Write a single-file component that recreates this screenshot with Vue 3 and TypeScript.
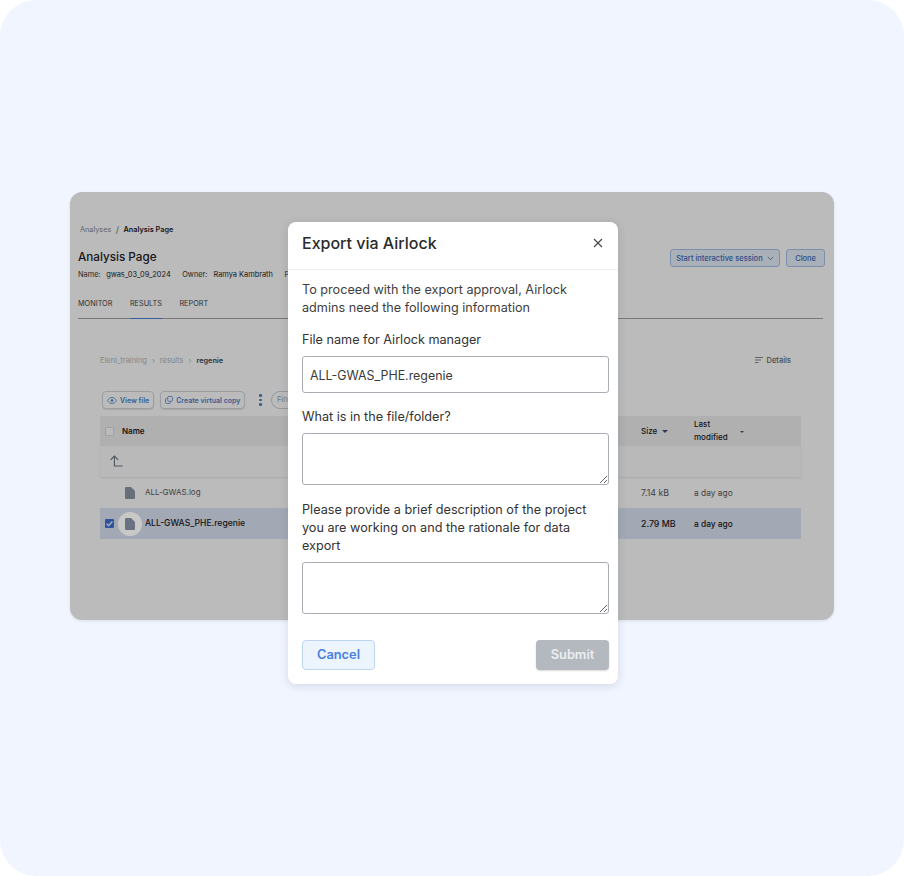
<script setup lang="ts">
interface FileRow { name: string; size: string; age: string; selected: boolean }
const files: FileRow[] = [
  { name: 'ALL-GWAS.log', size: '7.14 kB', age: 'a day ago', selected: false },
  { name: 'ALL-GWAS_PHE.regenie', size: '2.79 MB', age: 'a day ago', selected: true },
]
</script>

<template>
  <div class="stage">
    <section class="panel">
      <div class="crumbs"><span class="muted">Analyses</span><span class="slash">/</span><b>Analysis Page</b></div>
      <div class="head">
        <div>
          <h2>Analysis Page</h2>
          <div class="meta">
            <span class="m">Name:</span><span>gwas_03_09_2024</span>
            <span class="m owner">Owner:</span><span>Ramya Kambrath</span>
            <span class="m owner">Project</span>
          </div>
        </div>
        <div class="head-actions">
          <button class="pill">Start interactive session
            <svg width="7" height="5" viewBox="0 0 7 5"><path d="M.8 1l2.7 2.6L6.2 1" fill="none" stroke="#5d7ba8" stroke-width=".9" /></svg>
          </button>
          <button class="pill clone">Clone</button>
        </div>
      </div>
      <nav class="tabs">
        <span>MONITOR</span><span class="on">RESULTS</span><span>REPORT</span>
      </nav>
      <div class="browser">
        <div class="path">
          <span class="faded">Eleni_training</span><span class="faded sep">›</span>
          <span class="faded">results</span><span class="faded sep">›</span>
          <b>regenie</b>
          <span class="details">
            <svg width="8" height="6" viewBox="0 0 8 6"><path d="M0 .5h8M0 3h6M0 5.5h3.5" stroke="#888" stroke-width="1" /></svg>
            Details
          </span>
        </div>
        <div class="tools">
          <button class="tool">
            <svg width="10" height="7" viewBox="0 0 10 7"><path d="M.5 3.5C2 1.3 3.4.5 5 .5s3 .8 4.5 3C8 5.700 6.600 6.500 5 6.500S2 5.700.5 3.500z" fill="none" stroke="#4f80c8" stroke-width=".8" /><circle cx="5" cy="3.500" r="1.300" fill="#4f80c8" /></svg>
            View file
          </button>
          <button class="tool">
            <svg width="8" height="8" viewBox="0 0 8 8"><rect x="2.700" y=".5" width="4.800" height="4.800" rx="1" fill="none" stroke="#4f80c8" stroke-width=".8" /><path d="M1.700 2.500H1.300a.8.8 0 0 0-.8.8v3.400c0 .4.400.8.800.8h3.400c.4 0 .8-.4.800-.8v-.4" fill="none" stroke="#4f80c8" stroke-width=".8" /></svg>
            Create virtual copy
          </button>
          <span class="kebab"><i></i><i></i><i></i></span>
          <span class="find">Find</span>
        </div>
        <div class="table">
          <div class="row header">
            <span class="box"></span>
            <span class="name">Name</span>
            <span class="size">Size <i class="caret"></i></span>
            <span class="age lm">Last<br />modified<i class="caret small"></i></span>
          </div>
          <div class="row up">
            <svg class="up-icon" width="13" height="12" viewBox="0 0 13 12"><path d="M.6 4.800L4.400 1 8.200 4.800M4.400 1.200V11H12.600" fill="none" stroke="#6d7680" stroke-width="1.100" /></svg>
          </div>
          <div v-for="f in files" :key="f.name" class="row file" :class="{ selected: f.selected }">
            <span class="check" v-if="f.selected">
              <svg width="9" height="9" viewBox="0 0 9 9"><path d="M1.600 4.700l2 2 3.800-4.200" fill="none" stroke="#fff" stroke-width="1.200" /></svg>
            </span>
            <span class="check-slot" v-else></span>
            <span class="icon-wrap" :class="{ halo: f.selected }">
              <svg width="10" height="12" viewBox="0 0 10 12"><path d="M1 0h5l4 4v7a1 1 0 0 1-1 1H1a1 1 0 0 1-1-1V1a1 1 0 0 1 1-1z" /></svg>
            </span>
            <span class="name">{{ f.name }}</span>
            <span class="size">{{ f.size }}</span>
            <span class="age">{{ f.age }}</span>
          </div>
        </div>
      </div>
      <div class="scrim"></div>
    </section>

    <form class="modal" @submit.prevent>
      <header>
        <h1>Export via Airlock</h1>
        <svg width="10" height="10" viewBox="0 0 10 10"><path d="M1 1l8 8M9 1L1 9" stroke="#444" stroke-width="1.100" /></svg>
      </header>
      <div class="body">
        <p class="intro">To proceed with the export approval, Airlock admins need the following information</p>
        <label class="lab">File name for Airlock manager</label>
        <input class="field" value="ALL-GWAS_PHE.regenie" />
        <label class="lab second">What is in the file/folder?</label>
        <textarea class="area"></textarea>
        <label class="lab third">Please provide a brief description of the project you are working on and the rationale for data export</label>
        <textarea class="area last"></textarea>
        <div class="foot">
          <button type="button" class="cancel">Cancel</button>
          <button type="submit" class="submit" disabled>Submit</button>
        </div>
      </div>
    </form>
  </div>
</template>

<style>
html, body { margin: 0; background: #fff; }
</style>

<style scoped>
* { box-sizing: border-box; }
.stage {
  position: relative;
  width: 904px;
  height: 876px;
  padding: 192px 70px 0;
  background: #f0f5ff;
  border-radius: 36px;
  font-family: Inter, "Liberation Sans", sans-serif;
  overflow: hidden;
}
.panel {
  position: relative;
  width: 764px;
  height: 428px;
  padding: 32px 11px 0 8px;
  background: #fff;
  border-radius: 12px;
  overflow: hidden;
  color: #1f2328;
  box-shadow: 0 1px 3px rgba(0,0,0,.1);
}
.scrim { position: absolute; inset: 0; background: rgba(0,0,0,.265); }
.crumbs { display: flex; align-items: center; height: 10px; padding-left: 2px; font-size: 7.300px; }
.crumbs b { font-weight: 600; }
.muted { color: #8a8a8a; }
.slash { margin: 0 4.500px; color: #777; font-size: 9px; }
.head { display: flex; justify-content: space-between; align-items: flex-start; margin-top: 15px; }
h2 { margin: 0; font-size: 11.700px; font-weight: 500; line-height: 16px; }
.meta { display: flex; margin-top: 4px; font-size: 7.400px; line-height: 11px; white-space: nowrap; }
.meta .m { color: #333; margin-right: 5.500px; }
.meta .owner { margin-left: 11.500px; margin-right: 6px; }
.head-actions { display: flex; gap: 6px; margin: 0 -2px 0 0; }
.pill {
  display: flex; align-items: center; gap: 4px; height: 18px; padding: 0 5.500px;
  border: 1px solid #a8c4e8; border-radius: 3px; background: #e8f0fb;
  color: #3f6cb8; font: 500 7.500px Inter, sans-serif;
}
.clone { padding: 0 8px; }
.tabs { display: flex; gap: 17.500px; height: 21px; margin-top: 18px; border-bottom: 1px solid #a4a4a4; font-size: 7.300px; color: #444; }
.tabs span { height: 21px; line-height: 12px; }
.tabs .on { border-bottom: 1px solid #4a7fd4; }
.browser { margin: 0 22px; }
.path { display: flex; align-items: center; height: 10px; margin-top: 36px; font-size: 7.500px; }
.path b { font-weight: 600; color: #3a4656; font-size: 7.300px; }
.faded { color: #b2b8be; }
.sep { margin: 0 5px; }
.details { display: flex; align-items: center; gap: 4px; margin-left: auto; margin-right: 10px; color: #666; font-weight: 500; }
.tools { display: flex; align-items: center; gap: 6px; height: 18px; margin-top: 26px; padding-left: 2px; }
.tool {
  display: flex; align-items: center; gap: 3px; height: 18px; padding: 0 4px;
  border: 1px solid #d2d8df; border-radius: 4px; background: #fff;
  color: #4f80c8; font: 600 7px Inter, sans-serif; white-space: nowrap;
  box-shadow: 0 1px 1px rgba(0,0,0,.1);
}
.kebab { display: flex; flex-direction: column; gap: 2px; margin: 0 3px 0 8px; }
.kebab i { width: 2.500px; height: 2.500px; border-radius: 50%; background: #4f80c8; }
.find { height: 18px; width: 60px; padding-left: 5px; border: 1px solid #c9d2dc; border-radius: 9px; color: #9aa; font-size: 7.500px; line-height: 16px; }
.table { margin-top: 7px; font-size: 8px; }
.row { position: relative; display: flex; align-items: center; }
.header { height: 30px; background: #f0f0f0; font-weight: 600; color: #222; }
.box { width: 9px; height: 9px; margin-left: 5px; background: #fff; border: 1px solid #ddd; border-radius: 1px; }
.name { margin-left: 8px; }
.size { position: absolute; left: 541px; white-space: nowrap; font-size: 8.800px; }
.header .size { font-size: 8px; font-weight: 500; }
.age { position: absolute; left: 594px; white-space: nowrap; font-size: 8.400px; }
.header .age { font-size: 8px; }
.lm { font-weight: 500; line-height: 13px; }
.caret { display: inline-block; width: 0; height: 0; margin-left: 3px; vertical-align: 1px; border: 3px solid transparent; border-bottom: 0; border-top-color: #3e5470; }
.caret.small { position: absolute; top: 13px; left: 43px; border-width: 2px; border-bottom: 0; }
.up { height: 31px; box-shadow: 0 1px 2px rgba(0,0,0,.1); background: #fcfcfc; }
.up-icon { margin-left: 10px; margin-top: -2px; }
.file { height: 31px; color: #5a5a5a; }
.file.selected { background: #dfe7f6; color: #1d2024; font-weight: 500; }
.file .name { margin-left: 3px; padding-bottom: 1px; }
.file.selected .name { font-size: 8.600px; }
.check, .check-slot { flex: none; width: 9px; height: 9px; margin-left: 5px; }
.check { display: flex; background: #3f73d6; border-radius: 1px; }
.icon-wrap { flex: none; display: flex; align-items: center; justify-content: center; width: 24px; height: 24px; margin-left: 4px; border-radius: 50%; }
.icon-wrap path { fill: #8e98a8; }
.icon-wrap.halo { position: relative; z-index: 1; background: #c8c8c7; }
.icon-wrap.halo path { fill: #697280; }
.modal {
  position: absolute; left: 288px; top: 222px; width: 330px; height: 462px;
  background: #fff; border-radius: 8px; color: #333;
  box-shadow: 0 2px 10px rgba(40,50,80,.14);
}
header { display: flex; align-items: center; justify-content: space-between; height: 48px; padding: 0 15px 6px 14px; border-bottom: 1px solid #eef0f2; }
h1 { margin: 0; font-size: 16px; font-weight: 500; color: #2b2b2b; }
.body { display: flex; flex-direction: column; padding: 11px 9px 0 14px; }
.intro { margin: 0; font-size: 12.650px; line-height: 18px; color: #3e3e3e; }
.lab { display: block; font-size: 12.650px; line-height: 18px; color: #333; }
.intro + .lab { margin-top: 14px; }
.field, .area {
  display: block; width: 100%; border: 1px solid #a9adb3; border-radius: 3px; outline: 0;
  font: 12.400px Inter, sans-serif; color: #3a3a3a; background: #fff;
}
.field { height: 37px; margin-top: 7px; padding: 1px 7px 0; }
.second { margin-top: 15px; }
.area { height: 52px; margin-top: 7px; }
.third { margin-top: 16px; }
.last { margin-top: 7px; }
.foot { display: flex; justify-content: space-between; margin-top: 26px; }
.cancel, .submit { height: 30px; padding: 0 0 2px; border-radius: 4px; font: 600 12.800px Inter, sans-serif; }
.cancel { width: 73px; border: 1px solid #bcd6f4; background: #ecf4fe; color: #4b7fdc; }
.submit { width: 73px; border: 0; background: #b4b8bf; color: #eceef0; box-shadow: 0 1px 2px rgba(0,0,0,.15); }
</style>
